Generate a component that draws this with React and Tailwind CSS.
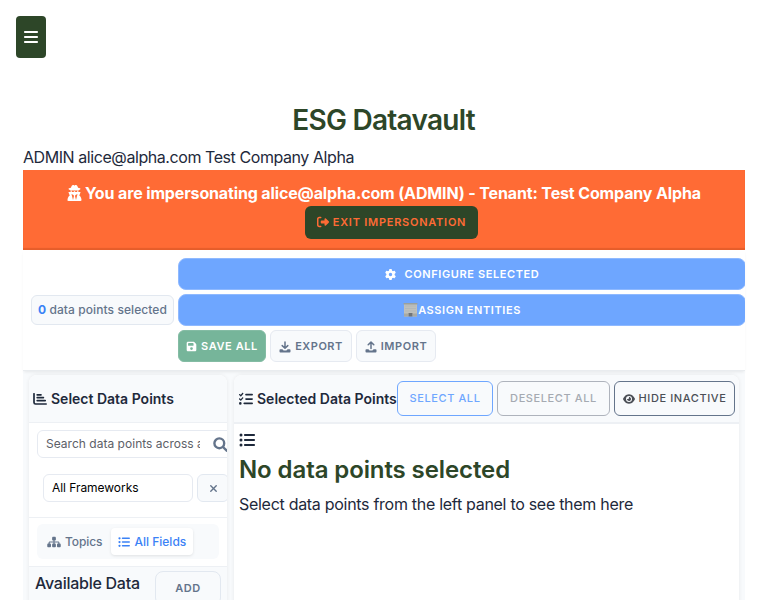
import React from "react";
import {
  FaBars, FaUserSecret, FaRightFromBracket, FaGear, FaFloppyDisk,
  FaListCheck, FaListUl, FaEye, FaSitemap, FaXmark,
} from "react-icons/fa6";

const caps = "text-[11px] font-semibold uppercase";

function ChartIcon() {
  return (
    <svg viewBox="0 0 14 12" className="h-3 w-3.5 shrink-0" fill="none" stroke="currentColor" strokeWidth="1.7" strokeLinecap="round">
      <path d="M1 .8V9.4Q1 11 2.6 11H13.2" />
      <path d="M4.2 1.8H8M4.2 4.6H10.4M4.2 7.6H12.2" />
    </svg>
  );
}

function SearchIcon() {
  return (
    <svg viewBox="0 0 15 15" className="ml-[13px] size-[15px] shrink-0 text-[#64748b]" fill="none" stroke="currentColor" strokeWidth="2.4" strokeLinecap="round">
      <circle cx="6.3" cy="6.3" r="4.9" />
      <path d="M10 10l3.7 3.7" />
    </svg>
  );
}

function BuildingIcon() {
  return (
    <svg viewBox="0 0 15 14" className="h-3.5 w-[15px] shrink-0">
      <path d="M1 1h13v12.5H1z" fill="#bfc0bb" />
      <path d="M.5 0h14v1.5H.5z" fill="#98a09f" />
      <path d="M2 3h11M2 5.5h11M2 8h11" stroke="#b2b8b9" strokeWidth="1" />
      <path d="M5.5 10h4v3.5h-4z" fill="#6f7478" />
      <path d="M1 10.5h4v3H1zM10 10.5h4v3h-4z" fill="#a9aaa2" />
    </svg>
  );
}

function TrayIcon({ up }) {
  return (
    <svg viewBox="0 0 12 12" className="mt-px size-3 shrink-0" fill="none" stroke="currentColor" strokeWidth="1.5" strokeLinecap="round" strokeLinejoin="round">
      <path d={up ? "M6 7.6V1.4M3.2 3.8L6 1.1L8.8 3.8" : "M6 .9V7M3.2 4.6L6 7.3L8.8 4.6"} />
      <path d="M1.4 8.2H3.4L4.6 9.4H7.4L8.6 8.2H10.6Q11.5 8.2 11.5 9V10.6Q11.5 11.5 10.6 11.5H1.4Q.5 11.5 .5 10.6V9Q.5 8.2 1.4 8.2Z" fill="currentColor" stroke="none" />
    </svg>
  );
}

function Toolbar() {
  return (
    <div className="relative z-10 flex h-[121px] items-center border-b border-[#e9ecef] bg-white pl-2 shadow-[0_2px_3px_-1px_rgba(0,0,0,0.08)]">
      <div className="flex h-[30px] w-[143px] shrink-0 items-center justify-center whitespace-nowrap rounded-md border border-[#e2e8f0] bg-[#f8fafc] text-[12px] font-medium tracking-[0.08px] text-[#64748b]">
        <span className="font-bold text-[#3b82f6]">0</span>&nbsp;data points selected
      </div>
      <div className="ml-1 flex min-w-0 grow flex-col gap-1 overflow-hidden">
        <button className={`${caps} flex h-8 w-[568px] shrink-0 items-center justify-center gap-[9px] rounded-lg border border-[#8fb9ff] bg-[#6ea6ff] tracking-[0.6px] text-white`}>
          <FaGear className="size-[11px]" />CONFIGURE SELECTED
        </button>
        <button className={`${caps} flex h-8 w-[568px] shrink-0 items-center justify-center rounded-lg border border-[#8fb9ff] bg-[#6ea6ff] tracking-[0.58px] text-white`}>
          <BuildingIcon />ASSIGN ENTITIES
        </button>
        <div className="flex gap-1">
          <button className={`${caps} flex h-8 w-22 items-center justify-center gap-1 rounded-md border border-[#84bca4] bg-[#76b59a] tracking-[0.6px] text-white`}>
            <FaFloppyDisk className="size-[11px]" />SAVE ALL
          </button>
          <button className={`${caps} flex h-8 w-[82px] items-center justify-center gap-1 rounded-md border border-[#e6eaf1] bg-[#f8fafc] tracking-[0.5px] text-[#64748b]`}>
            <TrayIcon />EXPORT
          </button>
          <button className={`${caps} flex h-8 w-20 items-center justify-center gap-1 rounded-md border border-[#e6eaf1] bg-[#f8fafc] tracking-[0.55px] text-[#64748b]`}>
            <TrayIcon up />IMPORT
          </button>
        </div>
      </div>
    </div>
  );
}

function LeftPanel() {
  return (
    <section className="h-[240px] w-[198px] shrink-0 overflow-hidden rounded-t-lg bg-white shadow-[0_0_4px_rgba(0,0,0,0.07)]">
      <div className="flex h-12 items-center gap-1 border-b border-[#edf0f4] bg-[#f8fafc] pl-1 text-[14px] font-semibold text-[#1e293b]">
        <ChartIcon />Select Data Points
      </div>
      <div className="h-[95px] border-b border-[#edf0f4] pl-2 pt-[7px]">
        <div className="flex h-7 w-[220px] items-center rounded-md border border-[#e6eaf1] pl-2 text-[12px] text-[#5c6067]">
          <span className="w-[154px] overflow-hidden whitespace-nowrap tracking-[0.02px]">Search data points across all</span>
          <SearchIcon />
        </div>
        <div className="mt-4 flex gap-1 pl-1.5">
          <div className="flex h-7 w-[150px] shrink-0 items-center rounded-md border border-[#e6eaf1] pl-2 text-[12px] tracking-[-0.05px] text-black">All Frameworks</div>
          <div className="flex h-7 w-8 shrink-0 items-center justify-center rounded-md border border-[#e2e8f0] bg-[#f8fafc] text-[#64748b]">
            <FaXmark className="size-[11px]" />
          </div>
        </div>
      </div>
      <div className="h-12 pl-2 pt-1.5">
        <div className="flex h-[35px] w-[182px] items-center rounded-md bg-[#f8fafc] pl-2.5 text-[12px] font-medium text-[#64748b]">
          <FaSitemap className="mr-1 h-3 w-3.5" /><span className="tracking-[-0.1px]">Topics</span>
          <div className="ml-[9px] flex h-[27px] w-[82px] items-center justify-center gap-1 whitespace-nowrap rounded bg-white text-[#3b82f6] shadow-[0_1px_3px_rgba(0,0,0,0.1)]">
            <FaListUl className="size-3" />All Fields
          </div>
        </div>
      </div>
      <div className="flex h-20 items-start border-t border-[#edf0f4] bg-[#f8fafc] pl-1.5 pt-1 text-[#1e293b]">
        <h3 className="w-[120px] text-[16px] font-medium leading-6 tracking-[-0.26px]">Available Data</h3>
        <button className={`${caps} h-[35px] w-[66px] rounded-lg border border-[#e2e8f0] tracking-[0.6px] text-[#64748b]`}>ADD</button>
      </div>
    </section>
  );
}

function RightPanel() {
  const action = "flex h-[35px] shrink-0 items-center justify-center gap-1 rounded-md border text-[11px] font-medium whitespace-nowrap";
  return (
    <section className="h-[240px] w-[505px] shrink-0 overflow-hidden rounded-t-lg bg-white shadow-[0_0_4px_rgba(0,0,0,0.07)]">
      <div className="flex h-[49px] items-center border-b-2 border-[#edf0f4] bg-[#f8fafc] pl-[5px]">
        <h3 className="flex w-[158px] shrink-0 items-center gap-1 whitespace-nowrap text-[14px] font-semibold text-[#1e293b]">
          <FaListCheck className="size-3.5" />Selected Data Points
        </h3>
        <div className="flex gap-1">
          <button className={`${action} w-24 border-[#6ea6ff] tracking-[0.6px] text-[#6ea6ff]`}>SELECT ALL</button>
          <button className={`${action} w-[113px] border-[#aeb3bc] tracking-[0.6px] text-[#a5aab2]`}>DESELECT ALL</button>
          <button className={`${action} w-[121px] border-[#64748b] tracking-[0.6px] text-[#4b4f56]`}><FaEye className="size-3" />HIDE INACTIVE</button>
        </div>
      </div>
      <div className="pl-[5px] pt-2 text-[#1e293b]">
        <FaListUl className="size-4" />
        <h2 className="mt-1.5 text-[24px] font-semibold leading-8 tracking-[-0.1px] text-[#2d4628]">No data points selected</h2>
        <p className="mt-1.5 text-[16px] leading-6 tracking-[-0.29px]">Select data points from the left panel to see them here</p>
      </div>
    </section>
  );
}

export default function App() {
  return (
    <div className="h-[600px] w-[768px] overflow-hidden bg-white font-['Inter','Liberation_Sans',sans-serif] text-[#1e293b]">
      <header className="h-[100px] p-4">
        <button className="flex h-[41.5px] w-[30px] items-center justify-center rounded bg-[#2d4628] text-white"><FaBars className="size-4" /></button>
      </header>
      <main className="ml-[23px] w-[722px]">
        <h1 className="pr-px text-center text-[28px] font-semibold leading-10 tracking-[-0.74px] text-[#2d4628]">ESG Datavault</h1>
        <p className="mt-1 h-[26px] text-[16px] leading-[26px] tracking-[-0.43px]">ADMIN alice@alpha.com Test Company Alpha</p>
        <div className="flex h-20 flex-col items-center bg-[#ff6b35] pt-[11px] text-white shadow-[inset_0_-2px_1px_rgba(150,50,10,0.25)]">
          <div className="mb-px flex h-6 items-center gap-[3px] whitespace-nowrap text-[16px] font-bold tracking-[-0.14px]"><FaUserSecret className="h-4 w-[15px]" />You are impersonating alice@alpha.com (ADMIN) - Tenant: Test Company Alpha</div>
          <button className={`${caps} ml-[15px] flex h-[32.5px] w-[173px] shrink-0 items-center justify-center gap-1 rounded-md bg-[#2d4628] tracking-[0.75px] text-[#ff6b35]`}><FaRightFromBracket className="size-3" />EXIT IMPERSONATION</button>
        </div>
        <Toolbar />
        <div className="flex h-[229px] gap-[7px] overflow-hidden bg-[#f8fafc] pl-1.5 pt-1">
          <LeftPanel />
          <RightPanel />
        </div>
      </main>
    </div>
  );
}
